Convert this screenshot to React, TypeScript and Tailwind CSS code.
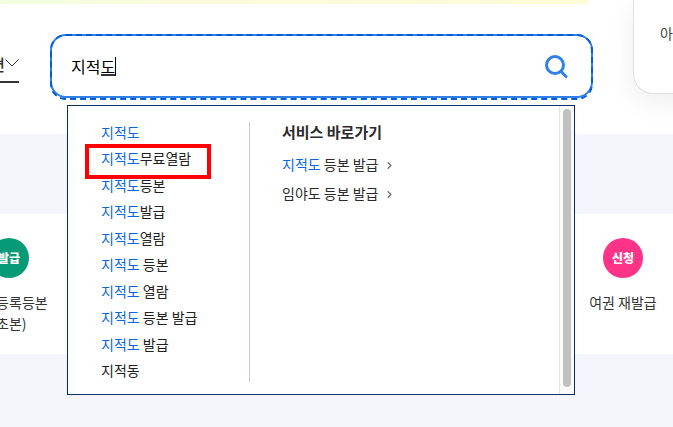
import { ChevronRight } from "lucide-react";

const suggestions: [string, string][] = [
  ["지적도", ""],
  ["지적도", "무료열람"],
  ["지적도", "등본"],
  ["지적도", "발급"],
  ["지적도", "열람"],
  ["지적도", " 등본"],
  ["지적도", " 열람"],
  ["지적도", " 등본 발급"],
  ["지적도", " 발급"],
  ["", "지적동"],
];

const services: [string, string][] = [
  ["지적도", " 등본 발급"],
  ["", "임야도 등본 발급"],
];

function SearchBox() {
  return (
    <form
      role="search"
      className="relative flex h-16 min-w-0 flex-1 rounded-2xl border-2 border-[#3080e8]"
      onSubmit={(e) => e.preventDefault()}
    >
      <input
        type="text"
        aria-label="검색어"
        defaultValue="지적도"
        className="-mx-0.5 -mt-0.5 h-[66px] min-w-0 flex-1 rounded-2xl border-2 border-dashed border-[#005fd6] pb-0.5 pl-[19px] pr-16 text-base text-black outline-none"
      />
      <span aria-hidden="true" className="absolute left-[49px] top-[21px] h-[19px] w-[15px] border-b-2 border-r border-b-[#333] border-r-black" />
      <button type="submit" aria-label="검색" className="absolute right-[22px] top-[18px]">
        <svg width="26" height="26" viewBox="0 0 26 26" fill="none" stroke="#3080e8" strokeWidth="3" strokeLinecap="round">
          <circle cx="12" cy="11" r="8.5" />
          <path d="M18 17.5l5 5" />
        </svg>
      </button>
      <Suggestions />
    </form>
  );
}

function Suggestions() {
  return (
    <div className="absolute left-[15px] right-4 top-[69px] z-10 flex h-[290px] border border-[#002f6c] bg-white">
      <div className="flex min-w-0 flex-1 py-4 pb-3 pl-[33px]">
        <ul className="relative flex h-[260px] w-[149px] shrink-0 flex-col justify-between border-r border-[#c3c9d6] pb-0.5 text-sm/5 text-[#1e2124]">
          {suggestions.map(([match, rest]) => (
            <li key={match + rest} className="whitespace-pre">
              <a href="#search">
                <span className="text-[#0b66e4]">{match}</span>
                {rest}
              </a>
            </li>
          ))}
          <li aria-hidden="true" className="absolute -left-4 top-[22px] h-[35px] w-[126px] border-4 border-[#ff0000]" />
        </ul>
        <section className="pl-8 text-[#2b2b2b]">
          <h2 className="text-[15px]/5 font-bold">서비스 바로가기</h2>
          <ul className="mt-2 text-sm/[29px]">
            {services.map(([match, rest]) => (
              <li key={match + rest}>
                <a href="#service" className="flex items-center gap-1.5 whitespace-pre">
                  <span>
                    <span className="text-[#0b66e4]">{match}</span>
                    {rest}
                  </span>
                  <ChevronRight size={11} strokeWidth={3} className="mt-0.5 text-[#717171]" />
                </a>
              </li>
            ))}
          </ul>
        </section>
      </div>
      <div aria-hidden="true" className="w-[15px] border-l border-[#e4e4e4] bg-[#fafafa] pb-[7px] pl-[3px] pt-[3px]">
        <div className="h-full w-2 rounded-full bg-[#c1c1c1]" />
      </div>
    </div>
  );
}

export default function App() {
  return (
    <div className="min-h-screen overflow-hidden bg-[#f4f6fb] font-['Noto_Sans_CJK_KR',sans-serif]">
      <header className="relative flex h-[134px] bg-white">
        <div className="flex min-w-0 flex-1 flex-col">
          <div className="mr-[44px] h-1 rounded-br-2xl bg-linear-to-r from-[#f6fde0] to-[#fffbd6]" />
          <div className="mr-10 mt-[30px] flex">
            <button
              type="button"
              className="mr-[31px] mt-[11px] flex h-[38px] w-[19px] shrink-0 items-center justify-end border-b-2 border-[#333] text-base text-[#333]"
            >
              <span className="shrink-0 pt-0.5 font-medium">통합편</span>
              <svg className="shrink-0" width="14" height="8" viewBox="0 0 14 8" fill="none" stroke="#333" aria-hidden="true">
                <path d="M.5.5L7 7 13.5.5" />
              </svg>
            </button>
            <SearchBox />
          </div>
        </div>
        <aside className="h-[94px] w-10 shrink-0 overflow-visible">
          <div className="h-full w-[300px] rounded-b-[20px] border border-t-0 border-[#e0e0e0] bg-white pl-[26px] pt-[23px] text-sm/5 text-[#444] shadow-[0_8px_28px_rgba(0,0,0,0.07)]">
            <a href="#login">아이디</a>
          </div>
        </aside>
      </header>
      <main className="mt-20 flex h-[140px] justify-between bg-white text-center text-sm/[21px] text-[#333]">
        <a href="#resident" className="-ml-[51px] flex w-[120px] flex-col items-center pt-6">
          <span className="flex size-10 items-center justify-center rounded-full bg-[#069b76] text-xs font-black text-white">발급</span>
          <span className="mt-[14px]">
            주민등록등본
            <br />
            (초본)
          </span>
        </a>
        <a href="#passport" className="-mr-[10px] flex w-[120px] flex-col items-center pt-6">
          <span className="flex size-10 items-center justify-center rounded-full bg-[#ff3388] text-xs font-black text-white">신청</span>
          <span className="mt-[14px]">여권 재발급</span>
        </a>
      </main>
    </div>
  );
}
